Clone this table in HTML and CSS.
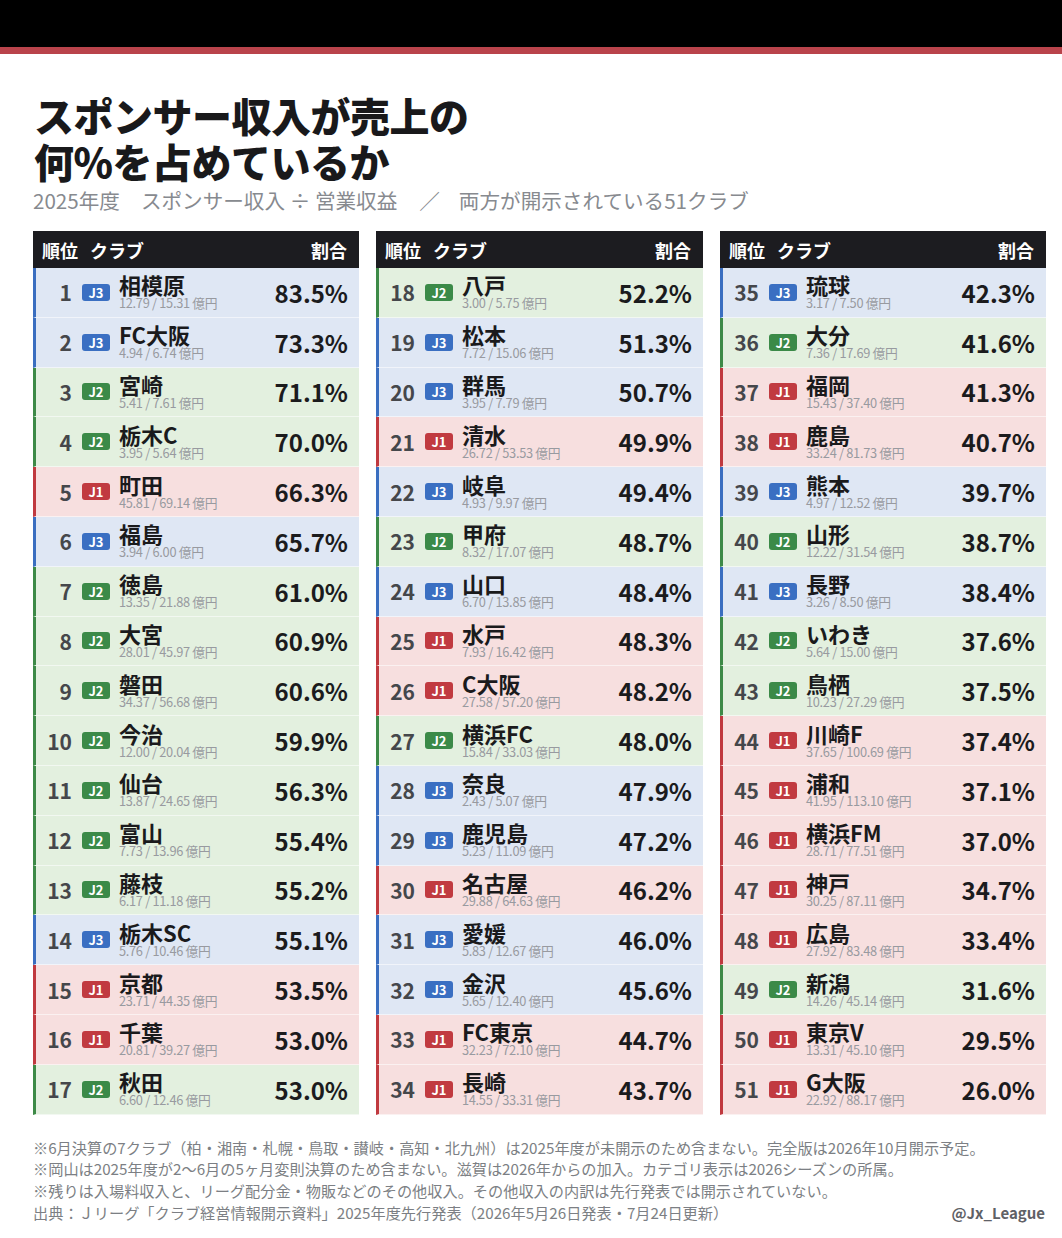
FILE: index.html
```html
<!DOCTYPE html>
<html lang="ja">
<head>
<meta charset="utf-8">
<title>スポンサー収入が売上の何%を占めているか</title>
<link rel="stylesheet" href="styles.css">
</head>
<body>
<div class="topbar"></div>
<div class="stripe"></div>
<main class="page">
  <h1 class="title">スポンサー収入が売上の<br>何%を占めているか</h1>
  <p class="subtitle"><span>2025年度</span><span class="sp1">スポンサー収入 ÷ 営業収益</span><span class="slash">／</span><span>両方が開示されている51クラブ</span></p>

  <div class="tables">
    <div class="table">
      <div class="thead"><span class="h-rank">順位</span><span class="h-club">クラブ</span><span class="h-pct">割合</span></div>
      <div class="row j3"><span class="rank">1</span><span class="badge">J3</span><div class="club"><div class="name">相模原</div><div class="sub">12.79 / 15.31 億円</div></div><span class="pct">83.5%</span></div>
      <div class="row j3"><span class="rank">2</span><span class="badge">J3</span><div class="club"><div class="name">FC大阪</div><div class="sub">4.94 / 6.74 億円</div></div><span class="pct">73.3%</span></div>
      <div class="row j2"><span class="rank">3</span><span class="badge">J2</span><div class="club"><div class="name">宮崎</div><div class="sub">5.41 / 7.61 億円</div></div><span class="pct">71.1%</span></div>
      <div class="row j2"><span class="rank">4</span><span class="badge">J2</span><div class="club"><div class="name">栃木C</div><div class="sub">3.95 / 5.64 億円</div></div><span class="pct">70.0%</span></div>
      <div class="row j1"><span class="rank">5</span><span class="badge">J1</span><div class="club"><div class="name">町田</div><div class="sub">45.81 / 69.14 億円</div></div><span class="pct">66.3%</span></div>
      <div class="row j3"><span class="rank">6</span><span class="badge">J3</span><div class="club"><div class="name">福島</div><div class="sub">3.94 / 6.00 億円</div></div><span class="pct">65.7%</span></div>
      <div class="row j2"><span class="rank">7</span><span class="badge">J2</span><div class="club"><div class="name">徳島</div><div class="sub">13.35 / 21.88 億円</div></div><span class="pct">61.0%</span></div>
      <div class="row j2"><span class="rank">8</span><span class="badge">J2</span><div class="club"><div class="name">大宮</div><div class="sub">28.01 / 45.97 億円</div></div><span class="pct">60.9%</span></div>
      <div class="row j2"><span class="rank">9</span><span class="badge">J2</span><div class="club"><div class="name">磐田</div><div class="sub">34.37 / 56.68 億円</div></div><span class="pct">60.6%</span></div>
      <div class="row j2"><span class="rank">10</span><span class="badge">J2</span><div class="club"><div class="name">今治</div><div class="sub">12.00 / 20.04 億円</div></div><span class="pct">59.9%</span></div>
      <div class="row j2"><span class="rank">11</span><span class="badge">J2</span><div class="club"><div class="name">仙台</div><div class="sub">13.87 / 24.65 億円</div></div><span class="pct">56.3%</span></div>
      <div class="row j2"><span class="rank">12</span><span class="badge">J2</span><div class="club"><div class="name">富山</div><div class="sub">7.73 / 13.96 億円</div></div><span class="pct">55.4%</span></div>
      <div class="row j2"><span class="rank">13</span><span class="badge">J2</span><div class="club"><div class="name">藤枝</div><div class="sub">6.17 / 11.18 億円</div></div><span class="pct">55.2%</span></div>
      <div class="row j3"><span class="rank">14</span><span class="badge">J3</span><div class="club"><div class="name">栃木SC</div><div class="sub">5.76 / 10.46 億円</div></div><span class="pct">55.1%</span></div>
      <div class="row j1"><span class="rank">15</span><span class="badge">J1</span><div class="club"><div class="name">京都</div><div class="sub">23.71 / 44.35 億円</div></div><span class="pct">53.5%</span></div>
      <div class="row j1"><span class="rank">16</span><span class="badge">J1</span><div class="club"><div class="name">千葉</div><div class="sub">20.81 / 39.27 億円</div></div><span class="pct">53.0%</span></div>
      <div class="row j2"><span class="rank">17</span><span class="badge">J2</span><div class="club"><div class="name">秋田</div><div class="sub">6.60 / 12.46 億円</div></div><span class="pct">53.0%</span></div>
    </div>

    <div class="table">
      <div class="thead"><span class="h-rank">順位</span><span class="h-club">クラブ</span><span class="h-pct">割合</span></div>
      <div class="row j2"><span class="rank">18</span><span class="badge">J2</span><div class="club"><div class="name">八戸</div><div class="sub">3.00 / 5.75 億円</div></div><span class="pct">52.2%</span></div>
      <div class="row j3"><span class="rank">19</span><span class="badge">J3</span><div class="club"><div class="name">松本</div><div class="sub">7.72 / 15.06 億円</div></div><span class="pct">51.3%</span></div>
      <div class="row j3"><span class="rank">20</span><span class="badge">J3</span><div class="club"><div class="name">群馬</div><div class="sub">3.95 / 7.79 億円</div></div><span class="pct">50.7%</span></div>
      <div class="row j1"><span class="rank">21</span><span class="badge">J1</span><div class="club"><div class="name">清水</div><div class="sub">26.72 / 53.53 億円</div></div><span class="pct">49.9%</span></div>
      <div class="row j3"><span class="rank">22</span><span class="badge">J3</span><div class="club"><div class="name">岐阜</div><div class="sub">4.93 / 9.97 億円</div></div><span class="pct">49.4%</span></div>
      <div class="row j2"><span class="rank">23</span><span class="badge">J2</span><div class="club"><div class="name">甲府</div><div class="sub">8.32 / 17.07 億円</div></div><span class="pct">48.7%</span></div>
      <div class="row j3"><span class="rank">24</span><span class="badge">J3</span><div class="club"><div class="name">山口</div><div class="sub">6.70 / 13.85 億円</div></div><span class="pct">48.4%</span></div>
      <div class="row j1"><span class="rank">25</span><span class="badge">J1</span><div class="club"><div class="name">水戸</div><div class="sub">7.93 / 16.42 億円</div></div><span class="pct">48.3%</span></div>
      <div class="row j1"><span class="rank">26</span><span class="badge">J1</span><div class="club"><div class="name">C大阪</div><div class="sub">27.58 / 57.20 億円</div></div><span class="pct">48.2%</span></div>
      <div class="row j2"><span class="rank">27</span><span class="badge">J2</span><div class="club"><div class="name">横浜FC</div><div class="sub">15.84 / 33.03 億円</div></div><span class="pct">48.0%</span></div>
      <div class="row j3"><span class="rank">28</span><span class="badge">J3</span><div class="club"><div class="name">奈良</div><div class="sub">2.43 / 5.07 億円</div></div><span class="pct">47.9%</span></div>
      <div class="row j3"><span class="rank">29</span><span class="badge">J3</span><div class="club"><div class="name">鹿児島</div><div class="sub">5.23 / 11.09 億円</div></div><span class="pct">47.2%</span></div>
      <div class="row j1"><span class="rank">30</span><span class="badge">J1</span><div class="club"><div class="name">名古屋</div><div class="sub">29.88 / 64.63 億円</div></div><span class="pct">46.2%</span></div>
      <div class="row j3"><span class="rank">31</span><span class="badge">J3</span><div class="club"><div class="name">愛媛</div><div class="sub">5.83 / 12.67 億円</div></div><span class="pct">46.0%</span></div>
      <div class="row j3"><span class="rank">32</span><span class="badge">J3</span><div class="club"><div class="name">金沢</div><div class="sub">5.65 / 12.40 億円</div></div><span class="pct">45.6%</span></div>
      <div class="row j1"><span class="rank">33</span><span class="badge">J1</span><div class="club"><div class="name">FC東京</div><div class="sub">32.23 / 72.10 億円</div></div><span class="pct">44.7%</span></div>
      <div class="row j1"><span class="rank">34</span><span class="badge">J1</span><div class="club"><div class="name">長崎</div><div class="sub">14.55 / 33.31 億円</div></div><span class="pct">43.7%</span></div>
    </div>

    <div class="table">
      <div class="thead"><span class="h-rank">順位</span><span class="h-club">クラブ</span><span class="h-pct">割合</span></div>
      <div class="row j3"><span class="rank">35</span><span class="badge">J3</span><div class="club"><div class="name">琉球</div><div class="sub">3.17 / 7.50 億円</div></div><span class="pct">42.3%</span></div>
      <div class="row j2"><span class="rank">36</span><span class="badge">J2</span><div class="club"><div class="name">大分</div><div class="sub">7.36 / 17.69 億円</div></div><span class="pct">41.6%</span></div>
      <div class="row j1"><span class="rank">37</span><span class="badge">J1</span><div class="club"><div class="name">福岡</div><div class="sub">15.43 / 37.40 億円</div></div><span class="pct">41.3%</span></div>
      <div class="row j1"><span class="rank">38</span><span class="badge">J1</span><div class="club"><div class="name">鹿島</div><div class="sub">33.24 / 81.73 億円</div></div><span class="pct">40.7%</span></div>
      <div class="row j3"><span class="rank">39</span><span class="badge">J3</span><div class="club"><div class="name">熊本</div><div class="sub">4.97 / 12.52 億円</div></div><span class="pct">39.7%</span></div>
      <div class="row j2"><span class="rank">40</span><span class="badge">J2</span><div class="club"><div class="name">山形</div><div class="sub">12.22 / 31.54 億円</div></div><span class="pct">38.7%</span></div>
      <div class="row j3"><span class="rank">41</span><span class="badge">J3</span><div class="club"><div class="name">長野</div><div class="sub">3.26 / 8.50 億円</div></div><span class="pct">38.4%</span></div>
      <div class="row j2"><span class="rank">42</span><span class="badge">J2</span><div class="club"><div class="name">いわき</div><div class="sub">5.64 / 15.00 億円</div></div><span class="pct">37.6%</span></div>
      <div class="row j2"><span class="rank">43</span><span class="badge">J2</span><div class="club"><div class="name">鳥栖</div><div class="sub">10.23 / 27.29 億円</div></div><span class="pct">37.5%</span></div>
      <div class="row j1"><span class="rank">44</span><span class="badge">J1</span><div class="club"><div class="name">川崎F</div><div class="sub">37.65 / 100.69 億円</div></div><span class="pct">37.4%</span></div>
      <div class="row j1"><span class="rank">45</span><span class="badge">J1</span><div class="club"><div class="name">浦和</div><div class="sub">41.95 / 113.10 億円</div></div><span class="pct">37.1%</span></div>
      <div class="row j1"><span class="rank">46</span><span class="badge">J1</span><div class="club"><div class="name">横浜FM</div><div class="sub">28.71 / 77.51 億円</div></div><span class="pct">37.0%</span></div>
      <div class="row j1"><span class="rank">47</span><span class="badge">J1</span><div class="club"><div class="name">神戸</div><div class="sub">30.25 / 87.11 億円</div></div><span class="pct">34.7%</span></div>
      <div class="row j1"><span class="rank">48</span><span class="badge">J1</span><div class="club"><div class="name">広島</div><div class="sub">27.92 / 83.48 億円</div></div><span class="pct">33.4%</span></div>
      <div class="row j2"><span class="rank">49</span><span class="badge">J2</span><div class="club"><div class="name">新潟</div><div class="sub">14.26 / 45.14 億円</div></div><span class="pct">31.6%</span></div>
      <div class="row j1"><span class="rank">50</span><span class="badge">J1</span><div class="club"><div class="name">東京V</div><div class="sub">13.31 / 45.10 億円</div></div><span class="pct">29.5%</span></div>
      <div class="row j1"><span class="rank">51</span><span class="badge">J1</span><div class="club"><div class="name">G大阪</div><div class="sub">22.92 / 88.17 億円</div></div><span class="pct">26.0%</span></div>
    </div>
  </div>

  <footer class="notes">
    <p>※6月決算の7クラブ（柏・湘南・札幌・鳥取・讃岐・高知・北九州）は2025年度が未開示のため含まない。完全版は2026年10月開示予定。</p>
    <p>※岡山は2025年度が2〜6月の5ヶ月変則決算のため含まない。滋賀は2026年からの加入。カテゴリ表示は2026シーズンの所属。</p>
    <p>※残りは入場料収入と、リーグ配分金・物販などのその他収入。その他収入の内訳は先行発表では開示されていない。</p>
    <div class="last-line">
      <p>出典：Ｊリーグ「クラブ経営情報開示資料」2025年度先行発表（2026年5月26日発表・7月24日更新）</p>
      <span class="credit">@Jx_League</span>
    </div>
  </footer>
</main>
</body>
</html>
```

FILE: styles.css
```css
* { box-sizing: border-box; }

html, body {
  margin: 0;
  padding: 0;
  background: #ffffff;
}

body {
  font-family: "Noto Sans CJK JP", "Noto Sans", sans-serif;
  color: #1b1b1d;
  width: 1062px;
  height: 1238px;
  overflow: hidden;
}

.topbar {
  height: 47px;
  background: #000000;
}

.stripe {
  height: 7px;
  background: #b9434b;
}

.page {
  padding: 38px 17px 0 33px;
}

.title {
  margin: 0 0 0 1px;
  font-size: 40px;
  line-height: 46px;
  font-weight: 900;
  letter-spacing: -0.5px;
  color: #19191b;
}

.subtitle {
  margin: 3px 0 0 0;
  font-size: 20.6px;
  line-height: 26px;
  color: #878a8f;
  font-weight: 400;
  white-space: nowrap;
}

.subtitle .sp1 { margin-left: 21px; }
.subtitle .slash { margin: 0 19px 0 22px; }

.tables {
  margin-top: 18px;
  display: grid;
  grid-template-columns: 326px 327px 326px;
  column-gap: 17px;
  width: 1012px;
}

.thead {
  height: 37px;
  background: #1c1c20;
  color: #ffffff;
  display: flex;
  align-items: center;
  padding: 0 12px 0 9px;
  font-size: 18px;
  font-weight: 700;
}

.h-club { margin-left: 12px; }
.h-pct { margin-left: auto; }

.row {
  height: 49.8px;
  display: flex;
  align-items: center;
  border-left: 3px solid;
  border-bottom: 1px solid rgba(255, 255, 255, 0.55);
  padding-right: 11px;
}

.row.j1 { background: #f7dfdf; border-left-color: #c0393f; }
.row.j2 { background: #e3f0df; border-left-color: #3d8a47; }
.row.j3 { background: #dfe7f4; border-left-color: #3a6ec0; }

.rank {
  width: 36px;
  text-align: right;
  font-size: 21px;
  font-weight: 700;
  color: #45474b;
}

.badge {
  margin-left: 10px;
  width: 28px;
  height: 17px;
  border-radius: 3px;
  color: #ffffff;
  font-size: 13px;
  font-weight: 700;
  display: flex;
  align-items: center;
  justify-content: center;
  line-height: 1;
}

.j1 .badge { background: #c13a40; }
.j2 .badge { background: #3b8a48; }
.j3 .badge { background: #3a6fc2; }

.club {
  margin-left: 9px;
  display: flex;
  flex-direction: column;
  margin-top: -1px;
}

.name {
  font-size: 22px;
  font-weight: 700;
  line-height: 23px;
  color: #1a1a1c;
}

.sub {
  font-size: 12.8px;
  line-height: 14px;
  color: #989aa0;
  letter-spacing: -0.3px;
}

.pct {
  margin-left: auto;
  font-size: 24px;
  font-weight: 700;
  color: #1b1b1d;
}

.notes {
  margin-top: 22px;
  width: 1012px;
}

.notes p {
  margin: 0;
  font-size: 15.2px;
  line-height: 21.7px;
  color: #7c7f84;
  white-space: nowrap;
}

.last-line {
  display: flex;
  align-items: center;
}

.credit {
  margin-left: auto;
  font-size: 15px;
  font-weight: 700;
  color: #5f6166;
  line-height: 21.7px;
}
```
